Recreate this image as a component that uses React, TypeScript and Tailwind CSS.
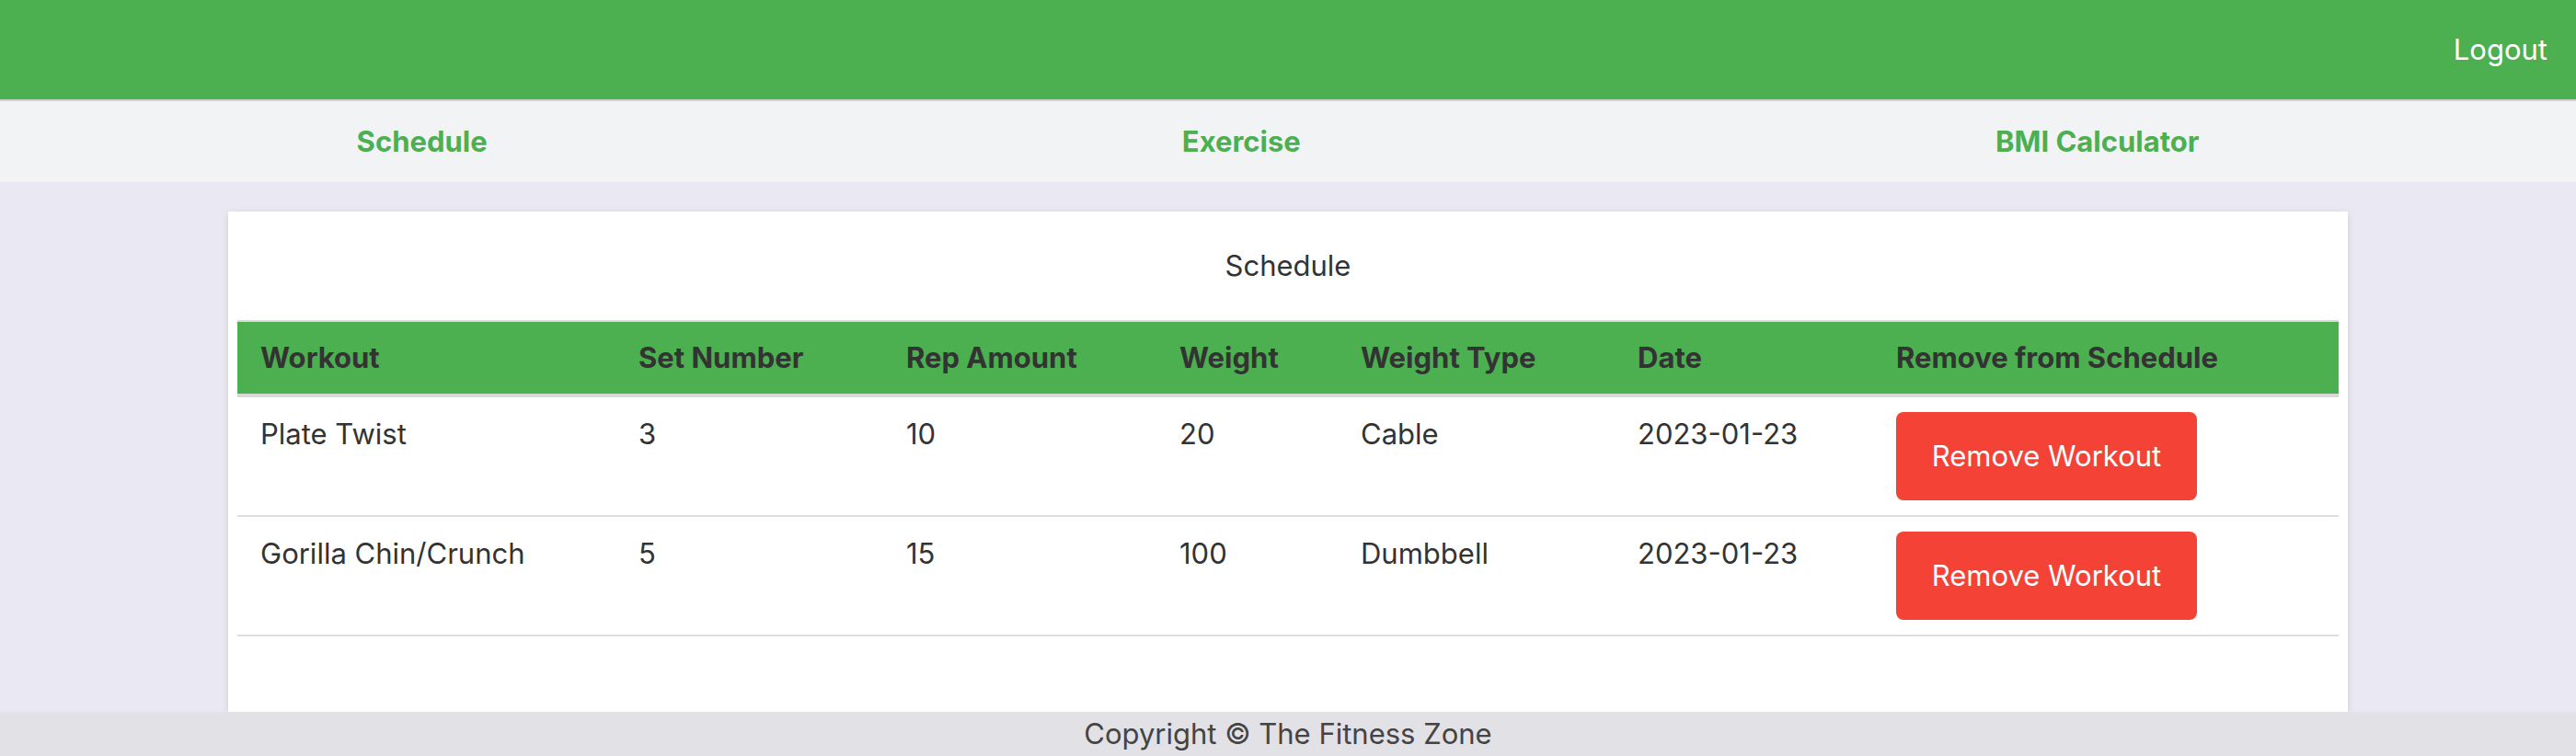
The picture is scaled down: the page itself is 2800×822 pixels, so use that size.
const workouts = [
    { name: "Plate Twist", sets: 3, reps: 10, weight: 20, type: "Cable", date: "2023-01-23" },
    { name: "Gorilla Chin/Crunch", sets: 5, reps: 15, weight: 100, type: "Dumbbell", date: "2023-01-23" },
];

const columns = ["Workout", "Set Number", "Rep Amount", "Weight", "Weight Type", "Date", "Remove from Schedule"];
const widths = ["411px", "291px", "297px", "197px", "301px", "281px", "506px"];

function Header() {
    return (
        <div className="h-[110px] bg-[#4caf50] border-b-2 border-[#d0d0d0] flex items-center justify-end pr-[31px]">
            <a className="text-white text-[31px] cursor-pointer">Logout</a>
        </div>
    );
}

function Nav() {
    return (
        <div className="h-[88px] bg-[#f2f3f5] flex items-center justify-around pl-[10px] pr-[32px]">
            <a className="text-[#4caf50] font-bold text-[31px]">Schedule</a>
            <a className="text-[#4caf50] font-bold text-[31px]">Exercise</a>
            <a className="text-[#4caf50] font-bold text-[31px]">BMI Calculator</a>
        </div>
    );
}

function ScheduleTable() {
    return (
        <table className="mx-[10px] border-collapse table-fixed w-[2284px] text-[#333] text-[31px]">
            <colgroup>
                {widths.map((w, i) => <col key={i} style={{ width: w }} />)}
            </colgroup>
            <thead>
                <tr className="h-[81px] bg-[#4caf50] border-t-2 border-t-[#dcdcdc] border-b-4 border-b-[#d9d9d9]">
                    {columns.map((c) => (
                        <th key={c} className="text-left font-bold px-[25px] align-middle">{c}</th>
                    ))}
                </tr>
            </thead>
            <tbody>
                {workouts.map((w, i) => (
                    <tr key={i} className="border-b-2 border-[#dddddd]">
                        <td className="px-[25px] py-[16px] align-top leading-[48px]">{w.name}</td>
                        <td className="px-[25px] py-[16px] align-top leading-[48px]">{w.sets}</td>
                        <td className="px-[25px] py-[16px] align-top leading-[48px]">{w.reps}</td>
                        <td className="px-[25px] py-[16px] align-top leading-[48px]">{w.weight}</td>
                        <td className="px-[25px] py-[16px] align-top leading-[48px]">{w.type}</td>
                        <td className="px-[25px] py-[16px] align-top leading-[48px]">{w.date}</td>
                        <td className="px-[25px] py-[16px] align-top">
                            <button className="h-[96px] w-[327px] rounded-[8px] bg-[#f44336] text-white text-[31px] leading-[48px]">
                                Remove Workout
                            </button>
                        </td>
                    </tr>
                ))}
            </tbody>
        </table>
    );
}

export default function App() {
    return (
        <div className="h-[822px] flex flex-col bg-[#eae9f3] overflow-hidden" style={{ fontFamily: "Inter, 'Noto Sans', sans-serif" }}>
            <Header />
            <Nav />
            <div className="flex-1 flex flex-col items-center pt-[32px] min-h-0">
                <div className="flex-1 w-[2304px] bg-white shadow-[0_2px_8px_rgba(0,0,0,0.12)]">
                    <div className="h-[118px] flex items-center justify-center text-[31px] text-[#333]">Schedule</div>
                    <ScheduleTable />
                </div>
            </div>
            <div className="h-[48px] bg-[#e1e1e6] flex items-center justify-center text-[31px] text-[#444]">
                Copyright © The Fitness Zone
            </div>
        </div>
    );
}
